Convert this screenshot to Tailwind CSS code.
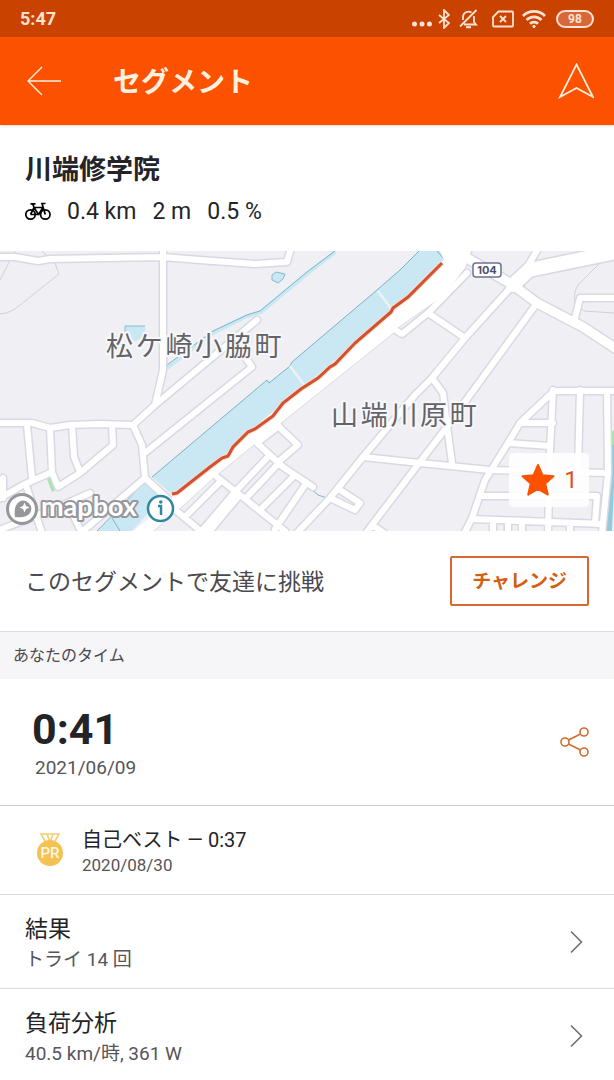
<!DOCTYPE html>
<html lang="ja">
<head>
  <meta charset="UTF-8">
  <meta name="viewport" content="width=device-width, initial-scale=1.0">
  <title>セグメント</title>
  <script src="https://cdn.jsdelivr.net/npm/@tailwindcss/browser@4"></script>
</head>
<body class="min-h-screen overflow-x-hidden bg-white font-['Roboto','Noto_Sans_CJK_JP',sans-serif] text-[#242428]">

  <!-- Status bar -->
  <div class="flex h-[37px] items-center justify-between bg-[#ca4200] px-5 text-[#ffe3d2]">
    <span class="text-lg font-bold">5:47</span>
    <div class="flex items-center gap-2">
      <svg class="-mr-0.5 h-5 w-5" viewBox="0 0 20 20" fill="currentColor"><circle cx="2.5" cy="15" r="2.5"/><circle cx="10" cy="15" r="2.5"/><circle cx="17.5" cy="15" r="2.5"/></svg>
      <svg class="h-5 w-3" viewBox="0 0 12 20" fill="none" stroke="currentColor" stroke-width="1.8"><path d="M1 6l10 8-5 5V1l5 5-10 8"/></svg>
      <svg class="mr-1.5 h-5 w-5" viewBox="0 0 20 20" fill="none" stroke="currentColor" stroke-width="1.8"><path d="M5 11V8a5.500 5.500 0 0 1 8.500-4.500M16 7v6l2 2.500H6M18.500 1L2 17.500"/><path d="M8 18.200h5" stroke-width="2"/></svg>
      <svg class="h-5 w-[22px]" viewBox="0 0 22 20" fill="none" stroke="currentColor" stroke-width="1.800"><path d="M6.500 2.500H20a1 1 0 0 1 1 1v13a1 1 0 0 1-1 1H2a1 1 0 0 1-1-1V8z"/><path d="M8 7l6 6M14 7l-6 6"/></svg>
      <svg class="mr-0.5 h-5 w-6" viewBox="0 0 24 20" fill="none" stroke="currentColor" stroke-width="2.800"><path d="M1 7a15.500 15.500 0 0 1 22 0M4.500 11a10.500 10.500 0 0 1 15 0M8 14.800a5.600 5.600 0 0 1 8 0"/><circle cx="12" cy="17.500" r="1.200" fill="currentColor" stroke-width="1"/></svg>
      <span class="flex h-[18px] w-[38px] items-center justify-center rounded-full border-2 border-[#ffe3d2] bg-[#d8683a] text-xs font-bold">98</span>
    </div>
  </div>

  <!-- App bar -->
  <header class="flex h-[88px] items-center bg-[#fc5200] px-5 text-[#fff1e0] shadow">
    <button type="button" aria-label="戻る" class="p-1.5">
      <svg class="h-9 w-9" viewBox="0 0 36 36" fill="none" stroke="currentColor" stroke-width="1.400"><path d="M35 18H2M16 4L2 18l14 14"/></svg>
    </button>
    <h1 class="ml-[45px] flex-1 pt-1 text-[28px] font-bold">セグメント</h1>
    <button type="button" aria-label="ナビゲーション">
      <svg class="h-9 w-9" viewBox="0 0 36 36" fill="none" stroke="currentColor" stroke-width="1.700"><path d="M18.500 1.500L35 34l-16.500-9L2 34z"/></svg>
    </button>
  </header>

  <main>
    <!-- Segment summary -->
    <section class="h-[126px] px-[25px] pt-[25px]">
      <h2 class="text-[27px] leading-10 font-bold">川端修学院</h2>
      <div class="mt-1 flex items-center gap-4 text-[23px] leading-9">
        <svg class="h-5 w-[26px] text-black" viewBox="0 0 26 20" fill="none" stroke="currentColor" stroke-width="1.700"><circle cx="5.500" cy="12.500" r="4.700"/><circle cx="20.300" cy="12.500" r="4.700"/><path d="M5.500 12.500L9 5.500h9M9 5.500l4.500 7h-8M13.500 12.500L18 5.500M20.300 12.500L17 1.500h3.500M9 5.500L7.800 2M5.500 1.800h5"/></svg>
        <span>0.4 km</span>
        <span>2 m</span>
        <span>0.5 %</span>
      </div>
    </section>

    <!-- Map -->
    <section class="relative h-[280px] overflow-hidden bg-[#efeff4]">
      <svg class="h-full w-full" viewBox="0 251 614 280" preserveAspectRatio="xMidYMid slice" fill="none">
        <!-- parks and boundaries -->
        <path d="M47 479l6-2 4 12-5 3zM609 434l5-4v24l-4-8z" fill="#a9e5a9"/>
        <path d="M0 280l15-29M55 263l4 11-44 35q-8 5-15 5M42 251l7 7M603 260l-24 24q-6 7-4 18l9 9 30 2" stroke="#d2d2d6"/>

        <!-- water -->
        <path d="M125 326h20v10l-9 5h-6l-5-8zM272 275l4-3 9 2-2 5-5 4-6-3z" fill="#c9e8f4"/>
        <path d="M125 333v-7h20M272 275l4-3 9 2-2 5-5 4-6-3z" stroke="#85bccf"/>
        <path d="M167 368l46-35 34-17 14-4 47-39 27-21" stroke="#c9e8f4" stroke-width="4"/>
        <path d="M167 365l46-34 34-16 13-4 47-39 28-21" stroke="#7fb4cb"/>
        <path d="M152 477L267 380l2 3 21-17 2-4 85-72 23-20 20-20h20l4 10-36 37-53 46-55 47-52 42-20 24-56 38z" fill="#c9e8f4"/>
        <path d="M152 477L267 380l2 3 21-17 2-4 85-72 23-20 20-20M437 251l8 9" stroke="#7fb0c6"/>
        <path d="M145 483L97 531h35l30-34z" fill="#c9e8f4"/>
        <path d="M143 484L97 531M112 518l8 13" stroke="#85b4c8"/>
        <path d="M290 366l18 24M378 291l18 24" stroke="#eef2f7" stroke-width="2.500"/>
        <path d="M614 445l-4 86h-3l1-40z" stroke="#94cbdc" stroke-width="4"/>
        <path d="M303 482l15 13 9 3" stroke="#7fb8d4"/>

        <!-- road casings -->
        <g stroke="#d9d9e3" stroke-linejoin="round" stroke-linecap="round">
          <path stroke-width="9" d="M0 257h15l23 4 12-2 113-2 37 3 55 4 32-2 4-14M163 248v122l-8 35-22 20-33-1-30 1-20 3-18-5H0M133 425l22-20 102-85M146 452l71-57 35-28-7-10-15-12M133 425l9 20 3 33 24 22M145 478l-62 53M27 425l5 53M50 428l2 44 6 15 22-14 33-28-1-20M72 425l2 32 6 15M-3 500l26-15 29-13M3 478v20M27 488l15 45M-3 531l66-26 27-12M72 513l10 20"/>
          <path stroke-width="9" d="M277 425l21 20-20 17M257 443l26 24 30 20M257 443l22-17M217 477l23 18 45 36M173 508l30 25M267 458l-32 34-35 41M279 463l-32 34M293 477l-30 30M305 485l-30 44M220 482l-35 35M238 497l-30 36"/>
          <path stroke-width="9" d="M467 273l-39 40-26 21-10-6M428 313l37 25M513 285l-48 53-33 40-17 17-52 62-33 41-35 37M537 303l-67 92-27 37-23 30-48 63-6 8M432 378l11 15 5 40 4 30M372 525l12 8M363 457l57 6 70 7 117 3M330 498l25 12 5-7-20-13"/>
          <path stroke-width="9" d="M618 298h-38l-6 24M618 391h-64l-34 32-12 20-23 37-13 38-8 16M553 390l-3 60-2 84M580 390l-2 81M607 391l1 82-6 60M520 423h33M508 443l42 3M480 496h117l-2 28M472 519l131 5M493 523v12M508 523v12M522 523v12M570 523v12"/>
          <path stroke-width="12" d="M467 258l46 27 24 18 46 24 35 23"/>
          <path stroke-width="17" d="M513 285l16-15 92-19"/>
          <path stroke-width="9" d="M525 271l14-24"/>
          <path stroke-width="3" d="M472 249l-7 18-22 28-46 32-5 6-75 60-40 32-64 52-26 24-35 30"/>
        </g>

        <!-- road fills -->
        <g stroke="#fff" stroke-linejoin="round" stroke-linecap="round">
          <path stroke-width="6" d="M0 257h15l23 4 12-2 113-2 37 3 55 4 32-2 4-14M163 248v122l-8 35-22 20-33-1-30 1-20 3-18-5H0M133 425l22-20 102-85M146 452l71-57 35-28-7-10-15-12M133 425l9 20 3 33 24 22M145 478l-62 53M27 425l5 53M50 428l2 44 6 15 22-14 33-28-1-20M72 425l2 32 6 15M-3 500l26-15 29-13M3 478v20M27 488l15 45M-3 531l66-26 27-12M72 513l10 20"/>
          <path stroke-width="6" d="M277 425l21 20-20 17M257 443l26 24 30 20M257 443l22-17M217 477l23 18 45 36M173 508l30 25M267 458l-32 34-35 41M279 463l-32 34M293 477l-30 30M305 485l-30 44M220 482l-35 35M238 497l-30 36"/>
          <path stroke-width="6" d="M467 273l-39 40-26 21-10-6M428 313l37 25M513 285l-48 53-33 40-17 17-52 62-33 41-35 37M537 303l-67 92-27 37-23 30-48 63-6 8M432 378l11 15 5 40 4 30M372 525l12 8M363 457l57 6 70 7 117 3M330 498l25 12 5-7-20-13"/>
          <path stroke-width="6" d="M618 298h-38l-6 24M618 391h-64l-34 32-12 20-23 37-13 38-8 16M553 390l-3 60-2 84M580 390l-2 81M607 391l1 82-6 60M520 423h33M508 443l42 3M480 496h117l-2 28M472 519l131 5M493 523v12M508 523v12M522 523v12M570 523v12"/>
          <path stroke-width="9" d="M467 258l46 27 24 18 46 24 35 23"/>
          <path stroke-width="14" d="M513 285l16-15 92-19"/>
          <path stroke-width="6" d="M525 271l14-24"/>
          <path fill="#fff" stroke="none" d="M172 494l38-27 18-11 20-24 52-42 55-47 53-46 36-37-5-12h33l-7 20-22 28-46 32-5 6-75 60-40 32-64 52-26 24-35 30h-20l40-32z"/>
        </g>

        <!-- segment route -->
        <path d="M172 494l5-1 33-26 12-9 6-2 5-9 15-15 7-3 18-13 10-13 18-14 17-11 12-11 5-3 20-21 36-31 2-4 15-11 34-34" stroke="#fbd9cd" stroke-width="5"/>
        <path d="M172 494l5-1 33-26 12-9 6-2 5-9 15-15 7-3 18-13 10-13 18-14 17-11 12-11 5-3 20-21 36-31 2-4 15-11 34-34" stroke="#d2512f" stroke-width="3"/>

        <!-- road number -->
        <rect x="473" y="263" width="28" height="14" rx="3" fill="#fff" stroke="#6e7191" stroke-width="1.500"/>
        <text x="487" y="274" text-anchor="middle" fill="#4c4f6b" class="font-['Inter',sans-serif] text-[11px] font-bold">104</text>

        <!-- place names -->
        <g fill="#646468" stroke="#f7f7fa" stroke-width="4" stroke-linejoin="round" paint-order="stroke" class="font-['Noto_Sans_CJK_JP',sans-serif] text-[27px] tracking-widest">
          <text x="106" y="356">松ケ崎小脇町</text>
          <text x="331" y="425">山端川原町</text>
        </g>

        <!-- mapbox logo -->
        <circle cx="22" cy="509" r="14.500" fill="#fff" stroke="#97979b" stroke-width="3"/>
        <path d="M15 517c-1-7 0-12 4-15a8 8 0 0 1 11 11c-3 4-8 5-15 4z" fill="#97979b"/>
        <path d="M24.500 502.500l1.500 3.500 3.500 1.500-3.500 1.500-1.500 3.500-1.500-3.500-3.500-1.500 3.500-1.500z" fill="#fff"/>
        <text x="41" y="516" fill="#fff" stroke="#97979b" stroke-width="4" stroke-linejoin="round" paint-order="stroke" class="font-['Lato',sans-serif] text-[27px] font-bold">mapbox</text>
        <circle cx="160.500" cy="508.500" r="12.500" fill="#fff" stroke="#2f87a1" stroke-width="2.500"/>
        <path d="M158 506h3v9" stroke="#2f87a1" stroke-width="2.500"/>
        <circle cx="160.800" cy="502" r="1.800" fill="#2f87a1"/>
      </svg>

      <!-- Star count -->
      <button type="button" aria-label="スター 1" class="absolute right-[25px] bottom-6 flex h-[54px] w-20 items-center justify-center gap-2 rounded bg-white/90 text-2xl text-[#e0531a]">
        <svg class="h-9 w-9" viewBox="0 0 36 36" fill="#fc5200" stroke="#fc5200" stroke-width="2" stroke-linejoin="round"><path d="M18 3l4.500 10.300 11 .900-8.300 7.400 2.600 11L18 27l-9.800 5.600 2.600-11L2.500 14.200l11-.900z"/></svg>
        <span>1</span>
      </button>
    </section>

    <!-- Challenge -->
    <section class="flex h-[101px] items-center justify-between border-b border-[#dcdce0] px-[25px]">
      <p class="pt-1 text-[23px] text-[#494950]">このセグメントで友達に挑戦</p>
      <button type="button" class="h-[50px] rounded-xs border-2 border-[#d9682f] px-5 pt-0.5 text-[19px] font-bold text-[#d4600f]">チャレンジ</button>
    </section>

    <h3 class="flex h-[47px] items-center bg-[#f6f6f8] px-[13px] text-base text-[#494950]">あなたのタイム</h3>

    <!-- Latest effort -->
    <section class="flex h-[127px] items-center justify-between border-b border-[#cfcfd2] pr-6 pl-8">
      <div>
        <p class="text-[43px] leading-[52px] font-bold">0:41</p>
        <p class="pl-[3px] text-[19px] leading-[26px] text-[#55555a]">2021/06/09</p>
      </div>
      <button type="button" aria-label="共有">
        <svg class="h-8 w-8" viewBox="0 0 32 32" fill="none" stroke="#cf6b33" stroke-width="1.600"><circle cx="7" cy="16" r="4"/><circle cx="26" cy="6" r="4"/><circle cx="26" cy="26" r="4"/><path d="M10.500 14l12-6M10.500 18l12 6"/></svg>
      </button>
    </section>

    <!-- Personal best -->
    <section class="flex h-[89px] items-center gap-[18px] border-b border-[#dcdce0] pl-9">
      <svg class="h-9 w-7" viewBox="0 0 28 36"><path d="M5 2h18l-4.500 8h-9zM11 2l3 8 3-8" fill="none" stroke="#f4cd72" stroke-width="1.600"/><circle cx="14" cy="21" r="13" fill="#f3c253"/><text x="14" y="26" text-anchor="middle" fill="#fff8e4" class="text-[15px] font-medium">PR</text></svg>
      <div class="pt-1">
        <p class="text-xl leading-[26px]">自己ベスト — 0:37</p>
        <p class="text-[17px] leading-6 text-[#55555a]">2020/08/30</p>
      </div>
    </section>

    <!-- Links -->
    <a href="#results" class="flex h-[94px] items-center justify-between border-b border-[#dcdce0] pr-[30px] pl-[25px]">
      <span class="flex flex-col pt-1">
        <span class="text-[23px] leading-8">結果</span>
        <span class="text-[19px] leading-7 text-[#55555a]">トライ 14 回</span>
      </span>
      <svg class="h-6 w-4" viewBox="0 0 16 24" fill="none" stroke="#6f6f74" stroke-width="1.600"><path d="M3 1.500L13.500 12 3 22.500"/></svg>
    </a>
    <a href="#analysis" class="flex h-[94px] items-center justify-between pr-[30px] pl-[25px]">
      <span class="flex flex-col pt-1">
        <span class="text-[23px] leading-8">負荷分析</span>
        <span class="text-[19px] leading-7 text-[#55555a]">40.5 km/時, 361 W</span>
      </span>
      <svg class="h-6 w-4" viewBox="0 0 16 24" fill="none" stroke="#6f6f74" stroke-width="1.600"><path d="M3 1.500L13.500 12 3 22.500"/></svg>
    </a>
  </main>

</body>
</html>
